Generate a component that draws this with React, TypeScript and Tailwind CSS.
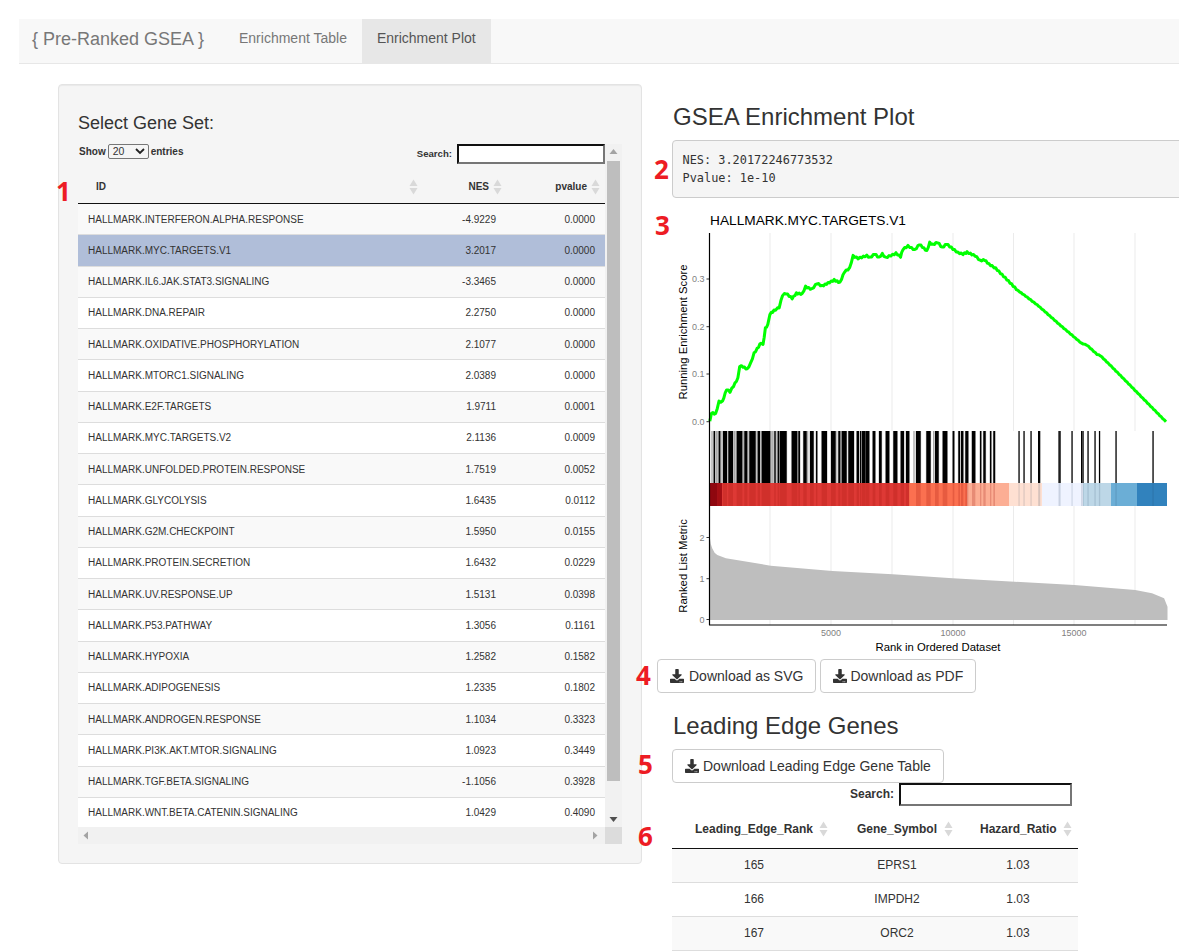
import React from "react";
import { FaDownload } from "react-icons/fa";

const sans = "font-['Liberation_Sans',Arial,sans-serif]";

const geneSets = [
  ["HALLMARK.INTERFERON.ALPHA.RESPONSE", "-4.9229", "0.0000"],
  ["HALLMARK.MYC.TARGETS.V1", "3.2017", "0.0000"],
  ["HALLMARK.IL6.JAK.STAT3.SIGNALING", "-3.3465", "0.0000"],
  ["HALLMARK.DNA.REPAIR", "2.2750", "0.0000"],
  ["HALLMARK.OXIDATIVE.PHOSPHORYLATION", "2.1077", "0.0000"],
  ["HALLMARK.MTORC1.SIGNALING", "2.0389", "0.0000"],
  ["HALLMARK.E2F.TARGETS", "1.9711", "0.0001"],
  ["HALLMARK.MYC.TARGETS.V2", "2.1136", "0.0009"],
  ["HALLMARK.UNFOLDED.PROTEIN.RESPONSE", "1.7519", "0.0052"],
  ["HALLMARK.GLYCOLYSIS", "1.6435", "0.0112"],
  ["HALLMARK.G2M.CHECKPOINT", "1.5950", "0.0155"],
  ["HALLMARK.PROTEIN.SECRETION", "1.6432", "0.0229"],
  ["HALLMARK.UV.RESPONSE.UP", "1.5131", "0.0398"],
  ["HALLMARK.P53.PATHWAY", "1.3056", "0.1161"],
  ["HALLMARK.HYPOXIA", "1.2582", "0.1582"],
  ["HALLMARK.ADIPOGENESIS", "1.2335", "0.1802"],
  ["HALLMARK.ANDROGEN.RESPONSE", "1.1034", "0.3323"],
  ["HALLMARK.PI3K.AKT.MTOR.SIGNALING", "1.0923", "0.3449"],
  ["HALLMARK.TGF.BETA.SIGNALING", "-1.1056", "0.3928"],
  ["HALLMARK.WNT.BETA.CATENIN.SIGNALING", "1.0429", "0.4090"],
];

const leadingEdge = [
  ["165", "EPRS1", "1.03"],
  ["166", "IMPDH2", "1.03"],
  ["167", "ORC2", "1.03"],
];

// curve traced off the plot
const curveZoom = [
  [203, 995], [208, 968], [220, 972], [230, 935], [240, 935], [252, 898], [262, 905], [272, 888], [285, 865], [290, 828],
  [300, 830], [312, 838], [322, 820], [332, 790], [345, 770], [352, 758], [358, 765], [365, 715], [372, 705], [378, 672],
  [390, 662], [405, 652], [415, 615], [425, 610], [443, 625], [455, 610], [472, 612], [482, 590], [500, 598], [515, 580],
  [530, 588], [565, 570], [582, 578], [595, 545], [610, 535], [620, 498], [635, 505], [660, 497], [670, 503], [683, 492],
  [695, 503], [705, 492], [715, 503], [745, 490], [758, 500], [765, 478], [780, 468], [800, 480], [813, 463], [835, 483],
  [843, 458], [852, 464], [866, 457], [880, 473], [892, 462], [925, 488], [940, 492], [952, 487], [975, 497], [990, 512],
  [1003, 510], [1015, 522], [1035, 535], [1100, 602], [1118, 615], [1160, 648], [1220, 703], [1285, 760], [1300, 765],
  [1330, 793], [1340, 797], [1385, 843], [1495, 958], [1530, 995],
];
const px = (zx: number) => 640 + zx / 2.91;

// the running score moves in small steps, so zigzag between the traced points
function buildCurve() {
  const out: string[] = [];
  let flip = 1;
  for (let i = 0; i < curveZoom.length - 1; i++) {
    const [ax, ay] = curveZoom[i];
    const [bx, by] = curveZoom[i + 1];
    const x0 = px(ax);
    const x1 = px(bx);
    const y0 = 90 + ay / 3;
    const y1 = 90 + by / 3;
    const steps = Math.max(1, Math.round((x1 - x0) / 1.6));
    for (let s = 0; s < steps; s++) {
      const t = s / steps;
      const amp = x0 > 1000 ? 0.25 : 0.6;
      flip = -flip;
      out.push(`${(x0 + (x1 - x0) * t).toFixed(1)},${(y0 + (y1 - y0) * t + flip * amp).toFixed(1)}`);
    }
  }
  out.push("1166,421.7");
  return out.join(" ");
}
const curve = buildCurve();

const metricZoom = [
  [203, 352], [206, 372], [210, 385], [217, 398], [225, 405], [250, 415], [380, 437], [560, 453], [735, 463], [910, 475], [1090, 485],
  [1264, 495], [1441, 510], [1490, 520], [1525, 535], [1535, 560], [1535, 600], [203, 600],
];
const metric = metricZoom.map(([x, y]) => `${px(x).toFixed(1)},${(420 + y / 3).toFixed(1)}`).join(" ");

// hit blocks read off the plot: [start, end] in crop pixels
const blocksLeft = [
  [26, 30], [41, 46], [54, 66], [70, 84], [95, 112], [118, 127], [133, 152], [158, 165], [170, 196], [208, 212], [218, 222],
  [224, 245], [260, 277], [280, 285], [295, 305], [315, 326], [333, 337], [350, 366], [378, 392], [400, 406], [410, 425],
  [430, 447], [455, 462], [470, 480],
];
const greyLeft = [[33, 37], [87, 90], [200, 203], [113, 116], [306, 310], [394, 397]];
const blocksRight = [
  [0, 3], [16, 28], [38, 46], [57, 65], [77, 88], [100, 112], [122, 132], [138, 148], [168, 182], [199, 212], [225, 236],
  [248, 262], [278, 283], [295, 300], [303, 310], [316, 325], [336, 346], [360, 364], [370, 377], [390, 394], [400, 405],
];
const greyRight = [[160, 164], [219, 223], [333, 335], [403, 407]];
const sparse = [1019, 1024, 1031, 1038.6, 1039.6, 1059, 1060, 1072, 1081.6, 1083, 1088, 1095, 1099.5, 1116, 1153];

const toPage = (list: number[][], origin: number) => list.map(([a, b]) => [origin + a / 3, (b - a) / 3]);
const hits = [
  ...toPage(blocksLeft, 705),
  ...toPage(blocksRight, 860),
  ...sparse.map((x) => [x - 0.6, 1.3]),
];
const greyHits = [...toPage(greyLeft, 705), ...toPage(greyRight, 860)];

const heat = [
  [710, 722, "#a50f15"],
  [722, 909, "#de3935"],
  [909, 967, "#fb7050"],
  [967, 1009, "#fcae94"],
  [1009, 1042, "#fee0d2"],
  [1042, 1083, "#eff3ff"],
  [1083, 1111, "#bdd7e7"],
  [1111, 1137, "#6baed6"],
  [1137, 1167, "#3182bd"],
] as const;

function SortIcon() {
  return (
    <svg width="9" height="16" viewBox="0 0 9 16" className="shrink-0">
      <path d="M4.5 0.5 L8.5 7 L0.5 7 Z M0.5 9 L8.5 9 L4.5 15.5 Z" fill="#d9d9d9" />
    </svg>
  );
}

function Marker({ n, className }: { n: number; className: string }) {
  return (
    <span className={`absolute font-['Open_Sans',sans-serif] text-[26px] leading-none font-bold text-[#ed1c24] ${className}`}>
      {n}
    </span>
  );
}

function DownloadButton({ label, gap }: { label: string; gap: string }) {
  return (
    <button className={`flex h-[34px] items-center rounded-[4px] border border-[#ccc] bg-white px-[12px] text-[14px] text-[#333] ${gap}`}>
      <FaDownload className="h-[14px] w-[14px]" />
      {label}
    </button>
  );
}

function GseaPlot() {
  return (
    <svg width="507" height="448" viewBox="672 208 507 448" className={`block ${sans}`}>
      {[770, 831, 892, 953, 1013.5, 1074, 1135].map((x) => (
        <g key={x} stroke="#ebebeb" strokeWidth="1">
          <line x1={x} x2={x} y1="233" y2="431" />
          <line x1={x} x2={x} y1="506" y2="625" />
        </g>
      ))}
      <text x="710" y="225" fontSize="13.7" fill="#000">HALLMARK.MYC.TARGETS.V1</text>

      {/* running score */}
      <polyline points={curve} fill="none" stroke="#00ff00" strokeWidth="3" strokeLinejoin="round" />
      <line x1="709.5" x2="709.5" y1="233" y2="431" stroke="#000" strokeWidth="1.2" />
      {[[279, "0.3"], [326.7, "0.2"], [374, "0.1"], [421.7, "0.0"]].map(([y, t]) => (
        <g key={t}>
          <line x1="706.5" x2="709" y1={y} y2={y} stroke="#333" strokeWidth="1" />
          <text x="704.5" y={Number(y) + 3} fontSize="9" textAnchor="end" fill="#7f7f7f">{t}</text>
        </g>
      ))}
      <text transform="translate(686.5 332) rotate(-90)" fontSize="11.3" textAnchor="middle" fill="#000">Running Enrichment Score</text>

      {/* hits */}
      <rect x="711" y="431" width="76" height="52" fill="#c4c4c4" />
      {greyHits.map(([x, w]) => (
        <rect key={x} x={x} y="431" width={w} height="52" fill="#a8a8a8" />
      ))}
      {hits.filter(([x]) => x < 1000).map(([x, w]) => (
        <rect key={x} x={x - 0.5} y="431" width={w + 1} height="52" fill="#b5b5b5" />
      ))}
      {hits.map(([x, w]) => (
        <rect key={x} x={x} y="431" width={w} height="52" fill="#000" />
      ))}
      <line x1="709.5" x2="709.5" y1="431" y2="483" stroke="#000" strokeWidth="1.2" />

      {/* ranked list colour bar */}
      {heat.map(([a, b, c]) => (
        <rect key={a} x={a} y="483" width={b - a} height="23" fill={c} />
      ))}
      {hits.map(([x, w]) => (
        <rect key={x} x={x} y="483" width={w} height="23" fill={x < 1000 ? "#a01208" : "#1d3a55"} opacity={x < 1000 ? 0.22 : 0.14} />
      ))}
      <rect x="710" y="483" width="7" height="23" fill="#7a0009" opacity="0.5" />
      <line x1="709.5" x2="709.5" y1="483" y2="506" stroke="#000" strokeWidth="1.2" />

      {/* metric */}
      <polygon points={metric} fill="#bebebe" />
      <line x1="709.5" x2="709.5" y1="506" y2="625" stroke="#000" strokeWidth="1.2" />
      <line x1="709" x2="1167" y1="625" y2="625" stroke="#000" strokeWidth="1.2" />
      {[[537.5, "2"], [578.7, "1"], [619.5, "0"]].map(([y, t]) => (
        <g key={t}>
          <line x1="706.5" x2="709" y1={y} y2={y} stroke="#333" strokeWidth="1" />
          <text x="704.5" y={Number(y) + 3} fontSize="9" textAnchor="end" fill="#7f7f7f">{t}</text>
        </g>
      ))}
      <text transform="translate(686.5 566) rotate(-90)" fontSize="11.3" textAnchor="middle" fill="#000">Ranked List Metric</text>
      {[[831, "5000"], [953, "10000"], [1074, "15000"]].map(([x, t]) => (
        <text key={t} x={x} y="636" fontSize="9" textAnchor="middle" fill="#7f7f7f">{t}</text>
      ))}
      <text x="938" y="651" fontSize="11.3" textAnchor="middle" fill="#000">Rank in Ordered Dataset</text>
    </svg>
  );
}

function GeneSetTable() {
  return (
    <div className="flex h-[700px] w-[544px] flex-col">
      <div className="flex h-[683px]">
        <div className="flex w-[527px] flex-col">
          <div className="flex h-[26px] items-start justify-between">
            <div className="flex items-center pl-[1px] text-[10px] font-bold text-[#333]">
              Show
              <span className="mx-[2px] flex h-[15px] w-[41px] items-center justify-between rounded-[2px] border border-[#767676] bg-[#f5f5f5] pr-[3px] pl-[4px] font-normal text-[10.5px]">
                20
                <svg width="10" height="7" viewBox="0 0 10 7"><path d="M1 1 L5 5 L9 1" fill="none" stroke="#222" strokeWidth="1.8" /></svg>
              </span>
              entries
            </div>
            <div className="flex items-center text-[9.6px] font-bold text-[#333]">
              Search:
              <span className="ml-[5px] h-[20px] w-[148px] border-2 border-[#111] border-r-[#767676] border-b-[#767676] bg-white" />
            </div>
          </div>
          <div className="flex h-[34px] shrink-0 items-center border-b border-[#111] text-[10px] font-bold text-[#333]">
            <div className="flex flex-1 items-center justify-between pl-[18px]">ID<SortIcon /></div>
            <div className="flex w-[84px] items-center justify-end gap-[4px]">NES<SortIcon /></div>
            <div className="flex w-[103px] items-center justify-end gap-[4px] pr-[5px]">pvalue<SortIcon /></div>
          </div>
          <div className="flex-1 overflow-hidden">
            {geneSets.map(([id, nes, p], i) => (
              <div
                key={id}
                className={`flex h-[31.25px] items-center border-b border-[#ddd] text-[10px] text-[#333] ${
                  i === 1 ? "bg-[#b0bed9]" : i % 2 === 0 ? "bg-[#f9f9f9]" : "bg-white"
                }`}
              >
                <div className="flex-1 pl-[10px]">{id}</div>
                <div className="w-[60px] text-right">{nes}</div>
                <div className="w-[109px] pr-[10px] text-right">{p}</div>
              </div>
            ))}
          </div>
        </div>
        {/* vertical scrollbar */}
        <div className="flex w-[17px] flex-col items-center bg-[#f1f1f1]">
          <svg width="9" height="17" viewBox="0 0 9 17" className="shrink-0"><path d="M4.5 5 L8.5 10 L0.5 10 Z" fill="#a3a3a3" /></svg>
          <div className="h-[620px] w-[13px] shrink-0 bg-[#bebebe]" />
          <div className="flex-1" />
          <svg width="9" height="17" viewBox="0 0 9 17" className="shrink-0"><path d="M0.5 7 L8.5 7 L4.5 12 Z" fill="#505050" /></svg>
        </div>
      </div>
      {/* horizontal scrollbar */}
      <div className="flex h-[17px]">
        <div className="flex w-[527px] items-center justify-between bg-[#f1f1f1] pr-[7px] pl-[5px]">
          <svg width="6" height="9" viewBox="0 0 6 9"><path d="M5 0.5 L5 8.5 L0.5 4.5 Z" fill="#a3a3a3" /></svg>
          <svg width="6" height="9" viewBox="0 0 6 9"><path d="M1 0.5 L1 8.5 L5.5 4.5 Z" fill="#a3a3a3" /></svg>
        </div>
        <div className="w-[17px] bg-[#dcdcdc]" />
      </div>
    </div>
  );
}

function LeadingEdgeTable() {
  return (
    <div className="w-[406px] text-[12px] text-[#333]">
      <div className="flex h-[23px] items-start justify-end pr-[6px] font-bold">
        <span className="mt-[4px] leading-[14px]">Search:</span>
        <span className="ml-[5px] h-[23px] w-[173px] border-2 border-[#111] border-r-[#767676] border-b-[#767676] bg-white" />
      </div>
      <div className="grid h-[43px] grid-cols-[164px_122px_120px] items-center border-b border-[#111] pt-[3px] font-bold">
        <div className="flex items-center pr-[8px] pl-[23px]"><span className="flex-1">Leading_Edge_Rank</span><SortIcon /></div>
        <div className="flex items-center pr-[5px] pl-[21px]"><span className="flex-1">Gene_Symbol</span><SortIcon /></div>
        <div className="flex items-center pr-[6px] pl-[22px]"><span className="flex-1">Hazard_Ratio</span><SortIcon /></div>
      </div>
      {leadingEdge.map(([r, g, h], i) => (
        <div
          key={r}
          className={`grid h-[34px] grid-cols-[164px_122px_120px] items-center border-b border-[#ddd] pb-[2px] text-center ${
            i % 2 === 0 ? "bg-[#f9f9f9]" : "bg-white"
          }`}
        >
          <div>{r}</div>
          <div>{g}</div>
          <div>{h}</div>
        </div>
      ))}
    </div>
  );
}

export default function App() {
  return (
    <div className={`relative h-[951px] w-[1179px] overflow-hidden bg-white ${sans}`}>
      <nav className="mt-[19px] ml-[19px] flex h-[45px] items-stretch border-b border-[#e7e7e7] bg-[#f8f8f8]">
        <div className="flex w-[205px] items-center pb-[3px] pl-[13px] text-[18px] text-[#777]">{"{ Pre-Ranked GSEA }"}</div>
        <div className="flex items-start px-[15px] pt-[9px] text-[14px] text-[#777]">Enrichment Table</div>
        <div className="flex items-start bg-[#e7e7e7] px-[15px] pt-[9px] text-[14px] text-[#555]">Enrichment Plot</div>
      </nav>

      <div className="mt-[20px] flex items-start">
        <section className="ml-[58px] h-[780px] w-[584px] shrink-0 rounded-[4px] border border-[#e3e3e3] bg-[#f5f5f5] px-[19px] pt-[27px] shadow-[inset_0_1px_1px_rgba(0,0,0,0.05)]">
          <div className="h-[32px] text-[18px] leading-[22px] text-[#333]">Select Gene Set:</div>
          <GeneSetTable />
        </section>

        <main className="ml-[30px] w-[700px] shrink-0">
          <h2 className="mt-[19px] h-[37px] pl-[1px] text-[24px] leading-[28px] text-[#333]">GSEA Enrichment Plot</h2>
          <pre className="h-[58px] w-[600px] rounded-[4px] border border-[#ccc] bg-[#f5f5f5] px-[9.5px] pt-[10px] font-['DejaVu_Sans_Mono',monospace] text-[11.9px] leading-[18px] text-[#333]">
            {"NES: 3.20172246773532\nPvalue: 1e-10"}
          </pre>
          <div className="mt-[10px]"><GseaPlot /></div>
          <div className="mt-[3px] -ml-[15px] flex gap-[4px]">
            <DownloadButton label="Download as SVG" gap="gap-[5px]" />
            <DownloadButton label="Download as PDF" gap="gap-[3px]" />
          </div>
          <h2 className="mt-[19px] h-[37px] pl-[1px] text-[24px] leading-[28px] text-[#333]">Leading Edge Genes</h2>
          <DownloadButton label="Download Leading Edge Gene Table" gap="gap-[4px]" />
          <LeadingEdgeTable />
        </main>
      </div>

      <Marker n={1} className="top-[178px] left-[56px]" />
      <Marker n={2} className="top-[156px] left-[654px]" />
      <Marker n={3} className="top-[212px] left-[655px]" />
      <Marker n={4} className="top-[662px] left-[636px]" />
      <Marker n={5} className="top-[751px] left-[638px]" />
      <Marker n={6} className="top-[823px] left-[638px]" />
    </div>
  );
}
